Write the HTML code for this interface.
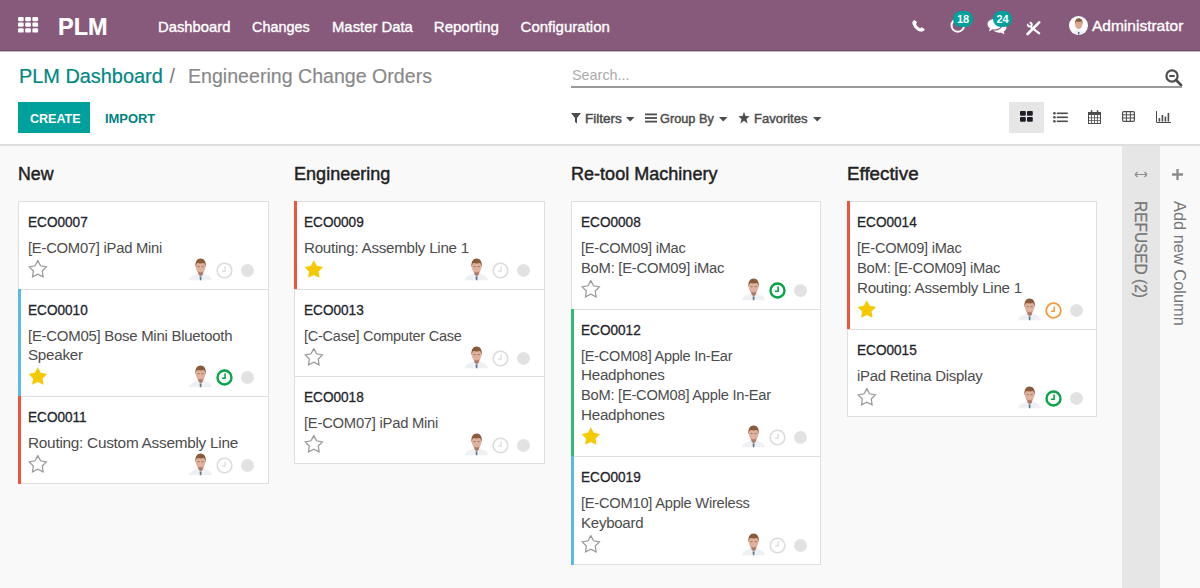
<!DOCTYPE html>
<html><head><meta charset="utf-8">
<style>
*{box-sizing:border-box;margin:0;padding:0}
html,body{width:1200px;height:588px;overflow:hidden;background:#fff;font-family:"Liberation Sans",sans-serif}
.a{position:absolute;white-space:nowrap;transform-origin:0 0}
#nav{position:absolute;left:0;top:0;width:1200px;height:51px;background:#875A7B;border-bottom:1px solid #734c68;box-shadow:0 1px 0 #c7b5c2;z-index:2}
.nt{color:#fff;font-size:15px;line-height:15px;-webkit-text-stroke:0.35px #fff}
.badge{position:absolute;background:#00A09D;color:#fff;font-weight:bold;font-size:11px;line-height:16px;height:16px;border-radius:8px;text-align:center}
#cp{position:absolute;left:0;top:52px;width:1200px;height:94px;background:#fff;border-bottom:2px solid #dedede}
#kb{position:absolute;left:0;top:146px;width:1200px;height:442px;background:#f9f9f9}
.card{position:absolute;width:251px;background:#fff;border:1px solid #dedede}
.bar{position:absolute;left:-1px;top:-1px;bottom:-1px;width:3px}
.eco{position:absolute;font-size:14.4px;line-height:14.4px;letter-spacing:0px;color:#1f242b;-webkit-text-stroke:0.3px #1f242b}
.ln{position:absolute;font-size:14.7px;line-height:14.7px;letter-spacing:-0.25px;color:#4c4c4c;white-space:nowrap}
.gt{position:absolute;font-size:18px;line-height:18px;color:#222;-webkit-text-stroke:0.45px #222}
</style></head><body>

<div id="nav">
  <svg class="a" style="left:18px;top:17px" width="21" height="16" viewBox="0 0 21 16"><g fill="#fff"><rect x="0" y="0" width="5.7" height="4.2" rx="1.2"/><rect x="7.2" y="0" width="5.7" height="4.2" rx="1.2"/><rect x="14.4" y="0" width="5.7" height="4.2" rx="1.2"/><rect x="0" y="5.6" width="5.7" height="4.2" rx="1.2"/><rect x="7.2" y="5.6" width="5.7" height="4.2" rx="1.2"/><rect x="14.4" y="5.6" width="5.7" height="4.2" rx="1.2"/><rect x="0" y="11.3" width="5.7" height="4.3" rx="1.2"/><rect x="7.2" y="11.3" width="5.7" height="4.3" rx="1.2"/><rect x="14.4" y="11.3" width="5.7" height="4.3" rx="1.2"/></g></svg>
  <div class="a nt" style="left:58px;top:15.5px;font-size:23.5px;line-height:23.5px;letter-spacing:0;font-weight:bold;-webkit-text-stroke:0.2px #fff">PLM</div>
  <div class="a nt" style="left:158.2px;top:19px;transform:scaleX(0.986)">Dashboard</div>
  <div class="a nt" style="left:251.7px;top:19px;transform:scaleX(0.96)">Changes</div>
  <div class="a nt" style="left:331.6px;top:19px;transform:scaleX(0.99)">Master Data</div>
  <div class="a nt" style="left:433.8px;top:19px;transform:scaleX(1.0)">Reporting</div>
  <div class="a nt" style="left:520.6px;top:19px;transform:scaleX(1.0)">Configuration</div>

  <!-- phone -->
  <svg class="a" style="left:912px;top:20px" width="13" height="12" viewBox="0 0 13 12">
    <path fill="#fff" d="M2.2 0.3 C1.2 0.8 0.2 1.8 0.4 3.2 C0.9 6.6 4.6 10.6 8.6 11.6 C10.1 12 11.2 11.2 12.3 10.3 L12.6 9.9 C12.8 9.6 12.7 9.2 12.4 9 L10.2 7.4 C9.9 7.2 9.5 7.2 9.2 7.5 L8.3 8.4 C6.3 7.5 4.7 5.7 3.9 3.8 L4.8 2.9 C5.1 2.6 5.1 2.2 4.9 1.9 L3.2 0.4 C2.9 0.1 2.5 0.1 2.2 0.3Z"/>
  </svg>
  <!-- activity clock -->
  <svg class="a" style="left:950px;top:18.2px" width="16" height="15" viewBox="0 0 16 15">
    <circle cx="7.8" cy="7.4" r="6.3" fill="none" stroke="#fff" stroke-width="2"/>
  </svg>
  <div class="badge" style="left:953px;top:11px;width:20px">18</div>
  <!-- chat -->
  <svg class="a" style="left:987px;top:17.5px" width="20" height="17" viewBox="0 0 20 17">
    <path fill="#fff" d="M7.5 1 C3.4 1 0.5 3.3 0.5 6.2 C0.5 7.8 1.4 9.2 2.9 10.2 L2 13.4 L5.6 11.2 C6.2 11.3 6.8 11.4 7.5 11.4 C11.6 11.4 14.5 9.1 14.5 6.2 C14.5 3.3 11.6 1 7.5 1Z"/>
    <path fill="#fff" d="M15.6 5.2 C15.7 5.5 15.7 5.9 15.7 6.2 C15.7 9.8 12.2 12.6 7.6 12.6 C7.3 12.6 7 12.6 6.7 12.6 C8 13.9 10.1 14.7 12.4 14.7 C13 14.7 13.5 14.6 14.1 14.5 L17.5 16.6 L16.7 13.5 C18.4 12.6 19.5 11.1 19.5 9.4 C19.5 7.6 17.9 6 15.6 5.2Z"/>
  </svg>
  <div class="badge" style="left:993px;top:11px;width:19px">24</div>
  <!-- tools -->
  <svg class="a" style="left:1025px;top:20px" width="17" height="16" viewBox="0 0 17 16">
    <path d="M6.4 7.4 L14.2 13.4" stroke="#fff" stroke-width="2.2" stroke-linecap="round" fill="none"/>
    <circle cx="4.8" cy="4.6" r="2.9" fill="#fff"/>
    <circle cx="4.7" cy="4.5" r="1.1" fill="#875A7B"/>
    <path d="M1 2.2 L2.8 0.6 L5.2 3 L3.4 4.6Z" fill="#875A7B"/>
    <path d="M2.6 14 L14.2 2.4" stroke="#fff" stroke-width="2.7" stroke-linecap="round" fill="none"/>
  </svg>
  <!-- avatar -->
  <svg class="a" style="left:1069px;top:16px" width="19" height="19" viewBox="0 0 19 19">
    <defs><clipPath id="cc"><circle cx="9.5" cy="9.5" r="9.3"/></clipPath></defs>
    <circle cx="9.5" cy="9.5" r="9.5" fill="#fff"/>
    <g clip-path="url(#cc)">
    <path d="M1.5 19 C2 16.6 4 15.6 6.5 14.8 L8 13.6 L11.4 13.6 L12.8 14.8 C15.2 15.6 17 16.6 17.5 19Z" fill="#eef0f3"/>
    <path d="M8.8 16 L10.6 16 L10.3 19 L9.1 19Z" fill="#62758c"/>
    <ellipse cx="9.7" cy="8.4" rx="3.6" ry="4.7" fill="#dcaa92"/>
    <path d="M6 8.8 C5.6 4.4 7.2 2.2 9.7 2.2 C12.4 2.2 14 4.2 13.5 8.8 C13.1 6.6 12.7 5.8 12.1 5.4 C10.8 5.8 8.7 5.8 7.4 5.4 C6.8 5.8 6.4 6.6 6 8.8Z" fill="#8a5a3d"/>
    </g>
  </svg>
  <div class="a nt" style="left:1092px;top:18px;font-size:15.5px;line-height:15.5px;letter-spacing:0">Administrator</div>
</div>

<div id="cp">
  <div class="a" style="left:19px;top:15px;font-size:19.9px;line-height:19.9px;color:#008784;-webkit-text-stroke:0.2px #008784">PLM Dashboard</div>
  <div class="a" style="left:169.5px;top:15px;font-size:19.6px;line-height:19.6px;color:#777">/</div>
  <div class="a" style="left:188px;top:15px;font-size:19.6px;line-height:19.6px;color:#888;-webkit-text-stroke:0.15px #888">Engineering Change Orders</div>

  <div class="a" style="left:18px;top:50px;width:72px;height:31px;background:#00A09D"></div>
  <div class="a" style="left:29.5px;top:60px;font-size:13.6px;line-height:13.6px;font-weight:bold;color:#fff;transform:scaleX(0.92)">CREATE</div>
  <div class="a" style="left:105px;top:60px;font-size:13.6px;line-height:13.6px;font-weight:bold;color:#00827f;transform:scaleX(0.95)">IMPORT</div>

  <div class="a" style="left:572px;top:16px;font-size:14.4px;line-height:14.4px;color:#ababab">Search...</div>
  <div class="a" style="left:571px;top:34px;width:611px;height:2px;background:#9a9a9a"></div>
  <svg class="a" style="left:1165px;top:17px" width="18" height="17" viewBox="0 0 18 17">
    <circle cx="7" cy="7" r="5.6" fill="none" stroke="#4c4c4c" stroke-width="2.2"/>
    <path d="M4.3 7 L9.7 7" stroke="#4c4c4c" stroke-width="2"/>
    <path d="M11 11 L16 16" stroke="#4c4c4c" stroke-width="2.6" stroke-linecap="round"/>
  </svg>

  <svg class="a" style="left:571px;top:61px" width="10" height="11" viewBox="0 0 10 11">
    <path d="M0 0 L10 0 L6 5 L6 10.5 L4 9 L4 5Z" fill="#4c4c4c"/>
  </svg>
  <div class="a" style="left:585px;top:60px;font-size:13px;line-height:13px;color:#4c4c4c;-webkit-text-stroke:0.45px #4c4c4c;transform:scaleX(1.04)">Filters</div>
  <svg class="a" style="left:626px;top:65px" width="9" height="5" viewBox="0 0 9 5"><path d="M0 0 L8.5 0 L4.25 4.5Z" fill="#4c4c4c"/></svg>

  <svg class="a" style="left:645px;top:61px" width="12" height="10" viewBox="0 0 12 10">
    <rect x="0" y="0.5" width="12" height="1.8" fill="#4c4c4c"/><rect x="0" y="4.1" width="12" height="1.8" fill="#4c4c4c"/><rect x="0" y="7.7" width="12" height="1.8" fill="#4c4c4c"/>
  </svg>
  <div class="a" style="left:660px;top:60px;font-size:13px;line-height:13px;color:#4c4c4c;-webkit-text-stroke:0.45px #4c4c4c;transform:scaleX(0.98)">Group By</div>
  <svg class="a" style="left:719px;top:65px" width="9" height="5" viewBox="0 0 9 5"><path d="M0 0 L8.5 0 L4.25 4.5Z" fill="#4c4c4c"/></svg>

  <svg class="a" style="left:738px;top:60px" width="12" height="12" viewBox="0 0 12 12">
    <path d="M6 0 L7.5 4 L11.8 4.2 L8.4 6.9 L9.6 11.4 L6 8.8 L2.4 11.4 L3.6 6.9 L0.2 4.2 L4.5 4Z" fill="#4c4c4c"/>
  </svg>
  <div class="a" style="left:754px;top:60px;font-size:13px;line-height:13px;color:#4c4c4c;-webkit-text-stroke:0.45px #4c4c4c;transform:scaleX(1.0)">Favorites</div>
  <svg class="a" style="left:813px;top:65px" width="9" height="5" viewBox="0 0 9 5"><path d="M0 0 L8.5 0 L4.25 4.5Z" fill="#4c4c4c"/></svg>

  <!-- view switcher -->
  <div class="a" style="left:1009px;top:50px;width:35px;height:31px;background:#e6e6e6"></div>
  <svg class="a" style="left:1020px;top:59px" width="13" height="11" viewBox="0 0 13 11">
    <rect x="0" y="0" width="5.8" height="4.8" rx="1" fill="#1e1e28"/><rect x="7" y="0" width="5.8" height="4.8" rx="1" fill="#1e1e28"/>
    <rect x="0" y="6" width="5.8" height="4.8" rx="1" fill="#1e1e28"/><rect x="7" y="6" width="5.8" height="4.8" rx="1" fill="#1e1e28"/>
  </svg>
  <svg class="a" style="left:1053px;top:60px" width="15" height="11" viewBox="0 0 15 11">
    <g fill="#4c4c4c"><circle cx="1.4" cy="1.3" r="1.3"/><circle cx="1.4" cy="5.3" r="1.3"/><circle cx="1.4" cy="9.3" r="1.3"/>
    <rect x="3.8" y="0.5" width="11" height="1.6"/><rect x="3.8" y="4.5" width="11" height="1.6"/><rect x="3.8" y="8.5" width="11" height="1.6"/></g>
  </svg>
  <svg class="a" style="left:1088px;top:58px" width="13" height="14" viewBox="0 0 13 14">
    <rect x="0.5" y="2.5" width="12" height="11" fill="none" stroke="#4c4c4c" stroke-width="1"/>
    <rect x="0.5" y="2.5" width="12" height="2.5" fill="#4c4c4c"/>
    <path d="M3.5 5 V13.5 M6.5 5 V13.5 M9.5 5 V13.5 M0.5 7.8 H12.5 M0.5 10.6 H12.5" stroke="#4c4c4c" stroke-width="0.8"/>
    <rect x="2.8" y="0.2" width="1.5" height="3.2" fill="#4c4c4c"/><rect x="8.8" y="0.2" width="1.5" height="3.2" fill="#4c4c4c"/>
  </svg>
  <svg class="a" style="left:1122px;top:59px" width="13" height="11" viewBox="0 0 13 11">
    <rect x="0.6" y="0.6" width="11.8" height="9.8" rx="1.2" fill="none" stroke="#4c4c4c" stroke-width="1.2"/>
    <path d="M0.6 3.8 H12.4 M0.6 7 H12.4 M4.4 0.6 V10.4 M8.4 0.6 V10.4" stroke="#4c4c4c" stroke-width="1"/>
  </svg>
  <svg class="a" style="left:1156px;top:59px" width="15" height="12" viewBox="0 0 15 12">
    <path d="M0.5 0 V11.5 H15" fill="none" stroke="#4c4c4c" stroke-width="1"/>
    <rect x="2.6" y="7" width="1.6" height="3.6" fill="#4c4c4c"/><rect x="5.6" y="4" width="1.6" height="6.6" fill="#4c4c4c"/><rect x="8.6" y="5.6" width="1.6" height="5" fill="#4c4c4c"/><rect x="11.6" y="2" width="1.6" height="8.6" fill="#4c4c4c"/>
  </svg>
</div>


<!--KB-->
<div id="kb"></div>
<div class="a gt" style="left:17.6px;top:165px;transform:scaleX(0.9886)">New</div>
<div class="card" style="left:18px;top:201px;width:251px;height:89px"></div>
<div class="a eco" style="left:27.9px;top:214.5px;transform:scaleX(0.9444)">ECO0007</div>
<div class="a ln" style="left:27.9px;top:240.5px;transform:scaleX(1.0068)">[E-COM07] iPad Mini</div>
<svg class="a" style="left:27.7px;top:259.5px" width="20" height="20" viewBox="0 0 20 20"><path d="M9.80 0.60 L12.56 5.80 L18.36 6.82 L14.27 11.05 L15.09 16.88 L9.80 14.30 L4.51 16.88 L5.33 11.05 L1.24 6.82 L7.04 5.80Z" fill="none" stroke="#9a9a9a" stroke-width="1.25" stroke-linejoin="miter"/></svg>
<svg class="a" style="left:189px;top:257.7px" width="23" height="23" viewBox="0 0 23 23">
<path d="M0 22.2 C0.6 18.6 3 17.4 6.5 16.4 L9.2 14.6 L14.2 14.6 L16.8 16.4 C20.2 17.4 22.4 18.6 23 22.2Z" fill="#eef0f3"/>
<path d="M9 14.2 L14.4 14.2 L13.6 17 L11.8 18.2 L9.8 17Z" fill="#a97b68"/>
<path d="M10.6 18.6 L12.6 18.6 L12.3 22.2 L10.9 22.2Z" fill="#62758c"/>
<ellipse cx="11.6" cy="8.6" rx="4.9" ry="6.2" fill="#e0b19c"/>
<path d="M7.6 12.5 C8.6 14.6 10 15.4 11.6 15.4 C13.3 15.4 14.6 14.6 15.6 12.5 C14.6 13.6 13.2 14.2 11.6 14.2 C10 14.2 8.6 13.6 7.6 12.5Z" fill="#b98270"/>
<path d="M6.5 9.5 C5.8 3.6 8.2 0.6 11.6 0.6 C15.2 0.6 17.4 3.4 16.7 9.5 C16.2 6.6 15.6 5.6 14.8 5 C13 5.6 10.2 5.6 8.4 5 C7.6 5.6 7 6.6 6.5 9.5Z" fill="#8a5a3d"/>
<path d="M8.6 8.6 H10.6 M12.6 8.6 H14.6" stroke="#8d6a5c" stroke-width="0.9"/>
</svg>
<svg class="a" style="left:216.3px;top:261.7px" width="17" height="17" viewBox="0 0 17 17"><circle cx="8.5" cy="8.5" r="7.3" fill="none" stroke="#dcdcdc" stroke-width="1.6"/><path d="M9.1 4.6 V9.2 H5.9" fill="none" stroke="#dcdcdc" stroke-width="1.3"/></svg>
<div class="a" style="left:241px;top:263.8px;width:13.2px;height:13.2px;border-radius:50%;background:#e2e2e2"></div>
<div class="card" style="left:18px;top:289px;width:251px;height:108px"></div>
<div class="a" style="left:18px;top:289px;width:3px;height:108px;background:#5cb8e6"></div>
<div class="a eco" style="left:27.9px;top:302.5px;transform:scaleX(0.9444)">ECO0010</div>
<div class="a ln" style="left:27.9px;top:328.5px;transform:scaleX(1.0165)">[E-COM05] Bose Mini Bluetooth</div>
<div class="a ln" style="left:27.9px;top:348.0px;transform:scaleX(1.0333)">Speaker</div>
<svg class="a" style="left:27.7px;top:367.0px" width="20" height="20" viewBox="0 0 20 20"><path d="M9.80 0.20 L12.74 5.85 L19.03 6.90 L14.56 11.45 L15.50 17.75 L9.80 14.90 L4.10 17.75 L5.04 11.45 L0.57 6.90 L6.86 5.85Z" fill="#f5c900"/></svg>
<svg class="a" style="left:189px;top:365.2px" width="23" height="23" viewBox="0 0 23 23">
<path d="M0 22.2 C0.6 18.6 3 17.4 6.5 16.4 L9.2 14.6 L14.2 14.6 L16.8 16.4 C20.2 17.4 22.4 18.6 23 22.2Z" fill="#eef0f3"/>
<path d="M9 14.2 L14.4 14.2 L13.6 17 L11.8 18.2 L9.8 17Z" fill="#a97b68"/>
<path d="M10.6 18.6 L12.6 18.6 L12.3 22.2 L10.9 22.2Z" fill="#62758c"/>
<ellipse cx="11.6" cy="8.6" rx="4.9" ry="6.2" fill="#e0b19c"/>
<path d="M7.6 12.5 C8.6 14.6 10 15.4 11.6 15.4 C13.3 15.4 14.6 14.6 15.6 12.5 C14.6 13.6 13.2 14.2 11.6 14.2 C10 14.2 8.6 13.6 7.6 12.5Z" fill="#b98270"/>
<path d="M6.5 9.5 C5.8 3.6 8.2 0.6 11.6 0.6 C15.2 0.6 17.4 3.4 16.7 9.5 C16.2 6.6 15.6 5.6 14.8 5 C13 5.6 10.2 5.6 8.4 5 C7.6 5.6 7 6.6 6.5 9.5Z" fill="#8a5a3d"/>
<path d="M8.6 8.6 H10.6 M12.6 8.6 H14.6" stroke="#8d6a5c" stroke-width="0.9"/>
</svg>
<svg class="a" style="left:216.3px;top:369.2px" width="17" height="17" viewBox="0 0 17 17"><circle cx="8.5" cy="8.5" r="7" fill="none" stroke="#0aa345" stroke-width="2.4"/><path d="M9.1 4.6 V9.2 H5.9" fill="none" stroke="#0aa345" stroke-width="1.6"/></svg>
<div class="a" style="left:241px;top:371.3px;width:13.2px;height:13.2px;border-radius:50%;background:#e2e2e2"></div>
<div class="card" style="left:18px;top:396px;width:251px;height:88px"></div>
<div class="a" style="left:18px;top:396px;width:3px;height:88px;background:#f0543c"></div>
<div class="a eco" style="left:27.9px;top:409.5px;transform:scaleX(0.9444)">ECO0011</div>
<div class="a ln" style="left:27.9px;top:435.5px;transform:scaleX(1.0452)">Routing: Custom Assembly Line</div>
<svg class="a" style="left:27.7px;top:454.5px" width="20" height="20" viewBox="0 0 20 20"><path d="M9.80 0.60 L12.56 5.80 L18.36 6.82 L14.27 11.05 L15.09 16.88 L9.80 14.30 L4.51 16.88 L5.33 11.05 L1.24 6.82 L7.04 5.80Z" fill="none" stroke="#9a9a9a" stroke-width="1.25" stroke-linejoin="miter"/></svg>
<svg class="a" style="left:189px;top:452.7px" width="23" height="23" viewBox="0 0 23 23">
<path d="M0 22.2 C0.6 18.6 3 17.4 6.5 16.4 L9.2 14.6 L14.2 14.6 L16.8 16.4 C20.2 17.4 22.4 18.6 23 22.2Z" fill="#eef0f3"/>
<path d="M9 14.2 L14.4 14.2 L13.6 17 L11.8 18.2 L9.8 17Z" fill="#a97b68"/>
<path d="M10.6 18.6 L12.6 18.6 L12.3 22.2 L10.9 22.2Z" fill="#62758c"/>
<ellipse cx="11.6" cy="8.6" rx="4.9" ry="6.2" fill="#e0b19c"/>
<path d="M7.6 12.5 C8.6 14.6 10 15.4 11.6 15.4 C13.3 15.4 14.6 14.6 15.6 12.5 C14.6 13.6 13.2 14.2 11.6 14.2 C10 14.2 8.6 13.6 7.6 12.5Z" fill="#b98270"/>
<path d="M6.5 9.5 C5.8 3.6 8.2 0.6 11.6 0.6 C15.2 0.6 17.4 3.4 16.7 9.5 C16.2 6.6 15.6 5.6 14.8 5 C13 5.6 10.2 5.6 8.4 5 C7.6 5.6 7 6.6 6.5 9.5Z" fill="#8a5a3d"/>
<path d="M8.6 8.6 H10.6 M12.6 8.6 H14.6" stroke="#8d6a5c" stroke-width="0.9"/>
</svg>
<svg class="a" style="left:216.3px;top:456.7px" width="17" height="17" viewBox="0 0 17 17"><circle cx="8.5" cy="8.5" r="7.3" fill="none" stroke="#dcdcdc" stroke-width="1.6"/><path d="M9.1 4.6 V9.2 H5.9" fill="none" stroke="#dcdcdc" stroke-width="1.3"/></svg>
<div class="a" style="left:241px;top:458.8px;width:13.2px;height:13.2px;border-radius:50%;background:#e2e2e2"></div>
<div class="a gt" style="left:293.6px;top:165px;transform:scaleX(1.0032)">Engineering</div>
<div class="card" style="left:294px;top:201px;width:251px;height:89px"></div>
<div class="a" style="left:294px;top:201px;width:3px;height:89px;background:#f0543c"></div>
<div class="a eco" style="left:303.9px;top:214.5px;transform:scaleX(0.9444)">ECO0009</div>
<div class="a ln" style="left:303.9px;top:240.5px;transform:scaleX(1.0323)">Routing: Assembly Line 1</div>
<svg class="a" style="left:303.7px;top:259.5px" width="20" height="20" viewBox="0 0 20 20"><path d="M9.80 0.20 L12.74 5.85 L19.03 6.90 L14.56 11.45 L15.50 17.75 L9.80 14.90 L4.10 17.75 L5.04 11.45 L0.57 6.90 L6.86 5.85Z" fill="#f5c900"/></svg>
<svg class="a" style="left:465px;top:257.7px" width="23" height="23" viewBox="0 0 23 23">
<path d="M0 22.2 C0.6 18.6 3 17.4 6.5 16.4 L9.2 14.6 L14.2 14.6 L16.8 16.4 C20.2 17.4 22.4 18.6 23 22.2Z" fill="#eef0f3"/>
<path d="M9 14.2 L14.4 14.2 L13.6 17 L11.8 18.2 L9.8 17Z" fill="#a97b68"/>
<path d="M10.6 18.6 L12.6 18.6 L12.3 22.2 L10.9 22.2Z" fill="#62758c"/>
<ellipse cx="11.6" cy="8.6" rx="4.9" ry="6.2" fill="#e0b19c"/>
<path d="M7.6 12.5 C8.6 14.6 10 15.4 11.6 15.4 C13.3 15.4 14.6 14.6 15.6 12.5 C14.6 13.6 13.2 14.2 11.6 14.2 C10 14.2 8.6 13.6 7.6 12.5Z" fill="#b98270"/>
<path d="M6.5 9.5 C5.8 3.6 8.2 0.6 11.6 0.6 C15.2 0.6 17.4 3.4 16.7 9.5 C16.2 6.6 15.6 5.6 14.8 5 C13 5.6 10.2 5.6 8.4 5 C7.6 5.6 7 6.6 6.5 9.5Z" fill="#8a5a3d"/>
<path d="M8.6 8.6 H10.6 M12.6 8.6 H14.6" stroke="#8d6a5c" stroke-width="0.9"/>
</svg>
<svg class="a" style="left:492.3px;top:261.7px" width="17" height="17" viewBox="0 0 17 17"><circle cx="8.5" cy="8.5" r="7.3" fill="none" stroke="#dcdcdc" stroke-width="1.6"/><path d="M9.1 4.6 V9.2 H5.9" fill="none" stroke="#dcdcdc" stroke-width="1.3"/></svg>
<div class="a" style="left:517px;top:263.8px;width:13.2px;height:13.2px;border-radius:50%;background:#e2e2e2"></div>
<div class="card" style="left:294px;top:289px;width:251px;height:88px"></div>
<div class="a eco" style="left:303.9px;top:302.5px;transform:scaleX(0.9444)">ECO0013</div>
<div class="a ln" style="left:303.9px;top:328.5px;transform:scaleX(0.9887)">[C-Case] Computer Case</div>
<svg class="a" style="left:303.7px;top:347.5px" width="20" height="20" viewBox="0 0 20 20"><path d="M9.80 0.60 L12.56 5.80 L18.36 6.82 L14.27 11.05 L15.09 16.88 L9.80 14.30 L4.51 16.88 L5.33 11.05 L1.24 6.82 L7.04 5.80Z" fill="none" stroke="#9a9a9a" stroke-width="1.25" stroke-linejoin="miter"/></svg>
<svg class="a" style="left:465px;top:345.7px" width="23" height="23" viewBox="0 0 23 23">
<path d="M0 22.2 C0.6 18.6 3 17.4 6.5 16.4 L9.2 14.6 L14.2 14.6 L16.8 16.4 C20.2 17.4 22.4 18.6 23 22.2Z" fill="#eef0f3"/>
<path d="M9 14.2 L14.4 14.2 L13.6 17 L11.8 18.2 L9.8 17Z" fill="#a97b68"/>
<path d="M10.6 18.6 L12.6 18.6 L12.3 22.2 L10.9 22.2Z" fill="#62758c"/>
<ellipse cx="11.6" cy="8.6" rx="4.9" ry="6.2" fill="#e0b19c"/>
<path d="M7.6 12.5 C8.6 14.6 10 15.4 11.6 15.4 C13.3 15.4 14.6 14.6 15.6 12.5 C14.6 13.6 13.2 14.2 11.6 14.2 C10 14.2 8.6 13.6 7.6 12.5Z" fill="#b98270"/>
<path d="M6.5 9.5 C5.8 3.6 8.2 0.6 11.6 0.6 C15.2 0.6 17.4 3.4 16.7 9.5 C16.2 6.6 15.6 5.6 14.8 5 C13 5.6 10.2 5.6 8.4 5 C7.6 5.6 7 6.6 6.5 9.5Z" fill="#8a5a3d"/>
<path d="M8.6 8.6 H10.6 M12.6 8.6 H14.6" stroke="#8d6a5c" stroke-width="0.9"/>
</svg>
<svg class="a" style="left:492.3px;top:349.7px" width="17" height="17" viewBox="0 0 17 17"><circle cx="8.5" cy="8.5" r="7.3" fill="none" stroke="#dcdcdc" stroke-width="1.6"/><path d="M9.1 4.6 V9.2 H5.9" fill="none" stroke="#dcdcdc" stroke-width="1.3"/></svg>
<div class="a" style="left:517px;top:351.8px;width:13.2px;height:13.2px;border-radius:50%;background:#e2e2e2"></div>
<div class="card" style="left:294px;top:376px;width:251px;height:88px"></div>
<div class="a eco" style="left:303.9px;top:389.5px;transform:scaleX(0.9444)">ECO0018</div>
<div class="a ln" style="left:303.9px;top:415.5px;transform:scaleX(1.0068)">[E-COM07] iPad Mini</div>
<svg class="a" style="left:303.7px;top:434.5px" width="20" height="20" viewBox="0 0 20 20"><path d="M9.80 0.60 L12.56 5.80 L18.36 6.82 L14.27 11.05 L15.09 16.88 L9.80 14.30 L4.51 16.88 L5.33 11.05 L1.24 6.82 L7.04 5.80Z" fill="none" stroke="#9a9a9a" stroke-width="1.25" stroke-linejoin="miter"/></svg>
<svg class="a" style="left:465px;top:432.7px" width="23" height="23" viewBox="0 0 23 23">
<path d="M0 22.2 C0.6 18.6 3 17.4 6.5 16.4 L9.2 14.6 L14.2 14.6 L16.8 16.4 C20.2 17.4 22.4 18.6 23 22.2Z" fill="#eef0f3"/>
<path d="M9 14.2 L14.4 14.2 L13.6 17 L11.8 18.2 L9.8 17Z" fill="#a97b68"/>
<path d="M10.6 18.6 L12.6 18.6 L12.3 22.2 L10.9 22.2Z" fill="#62758c"/>
<ellipse cx="11.6" cy="8.6" rx="4.9" ry="6.2" fill="#e0b19c"/>
<path d="M7.6 12.5 C8.6 14.6 10 15.4 11.6 15.4 C13.3 15.4 14.6 14.6 15.6 12.5 C14.6 13.6 13.2 14.2 11.6 14.2 C10 14.2 8.6 13.6 7.6 12.5Z" fill="#b98270"/>
<path d="M6.5 9.5 C5.8 3.6 8.2 0.6 11.6 0.6 C15.2 0.6 17.4 3.4 16.7 9.5 C16.2 6.6 15.6 5.6 14.8 5 C13 5.6 10.2 5.6 8.4 5 C7.6 5.6 7 6.6 6.5 9.5Z" fill="#8a5a3d"/>
<path d="M8.6 8.6 H10.6 M12.6 8.6 H14.6" stroke="#8d6a5c" stroke-width="0.9"/>
</svg>
<svg class="a" style="left:492.3px;top:436.7px" width="17" height="17" viewBox="0 0 17 17"><circle cx="8.5" cy="8.5" r="7.3" fill="none" stroke="#dcdcdc" stroke-width="1.6"/><path d="M9.1 4.6 V9.2 H5.9" fill="none" stroke="#dcdcdc" stroke-width="1.3"/></svg>
<div class="a" style="left:517px;top:438.8px;width:13.2px;height:13.2px;border-radius:50%;background:#e2e2e2"></div>
<div class="a gt" style="left:570.6px;top:165px;transform:scaleX(1.0028)">Re-tool Machinery</div>
<div class="card" style="left:571px;top:201px;width:250px;height:109px"></div>
<div class="a eco" style="left:580.9px;top:214.5px;transform:scaleX(0.9444)">ECO0008</div>
<div class="a ln" style="left:580.9px;top:240.5px;transform:scaleX(0.9952)">[E-COM09] iMac</div>
<div class="a ln" style="left:580.9px;top:260.5px;transform:scaleX(1.0071)">BoM: [E-COM09] iMac</div>
<svg class="a" style="left:580.7px;top:279.5px" width="20" height="20" viewBox="0 0 20 20"><path d="M9.80 0.60 L12.56 5.80 L18.36 6.82 L14.27 11.05 L15.09 16.88 L9.80 14.30 L4.51 16.88 L5.33 11.05 L1.24 6.82 L7.04 5.80Z" fill="none" stroke="#9a9a9a" stroke-width="1.25" stroke-linejoin="miter"/></svg>
<svg class="a" style="left:742px;top:277.7px" width="23" height="23" viewBox="0 0 23 23">
<path d="M0 22.2 C0.6 18.6 3 17.4 6.5 16.4 L9.2 14.6 L14.2 14.6 L16.8 16.4 C20.2 17.4 22.4 18.6 23 22.2Z" fill="#eef0f3"/>
<path d="M9 14.2 L14.4 14.2 L13.6 17 L11.8 18.2 L9.8 17Z" fill="#a97b68"/>
<path d="M10.6 18.6 L12.6 18.6 L12.3 22.2 L10.9 22.2Z" fill="#62758c"/>
<ellipse cx="11.6" cy="8.6" rx="4.9" ry="6.2" fill="#e0b19c"/>
<path d="M7.6 12.5 C8.6 14.6 10 15.4 11.6 15.4 C13.3 15.4 14.6 14.6 15.6 12.5 C14.6 13.6 13.2 14.2 11.6 14.2 C10 14.2 8.6 13.6 7.6 12.5Z" fill="#b98270"/>
<path d="M6.5 9.5 C5.8 3.6 8.2 0.6 11.6 0.6 C15.2 0.6 17.4 3.4 16.7 9.5 C16.2 6.6 15.6 5.6 14.8 5 C13 5.6 10.2 5.6 8.4 5 C7.6 5.6 7 6.6 6.5 9.5Z" fill="#8a5a3d"/>
<path d="M8.6 8.6 H10.6 M12.6 8.6 H14.6" stroke="#8d6a5c" stroke-width="0.9"/>
</svg>
<svg class="a" style="left:769.3px;top:281.7px" width="17" height="17" viewBox="0 0 17 17"><circle cx="8.5" cy="8.5" r="7" fill="none" stroke="#0aa345" stroke-width="2.4"/><path d="M9.1 4.6 V9.2 H5.9" fill="none" stroke="#0aa345" stroke-width="1.6"/></svg>
<div class="a" style="left:794px;top:283.8px;width:13.2px;height:13.2px;border-radius:50%;background:#e2e2e2"></div>
<div class="card" style="left:571px;top:309px;width:250px;height:148px"></div>
<div class="a" style="left:571px;top:309px;width:3px;height:148px;background:#30bb76"></div>
<div class="a eco" style="left:580.9px;top:322.5px;transform:scaleX(0.9444)">ECO0012</div>
<div class="a ln" style="left:580.9px;top:348.5px;transform:scaleX(0.9895)">[E-COM08] Apple In-Ear</div>
<div class="a ln" style="left:580.9px;top:368.0px;transform:scaleX(1.0342)">Headphones</div>
<div class="a ln" style="left:580.9px;top:388.0px;transform:scaleX(0.9995)">BoM: [E-COM08] Apple In-Ear</div>
<div class="a ln" style="left:580.9px;top:407.5px;transform:scaleX(1.0342)">Headphones</div>
<svg class="a" style="left:580.7px;top:426.5px" width="20" height="20" viewBox="0 0 20 20"><path d="M9.80 0.20 L12.74 5.85 L19.03 6.90 L14.56 11.45 L15.50 17.75 L9.80 14.90 L4.10 17.75 L5.04 11.45 L0.57 6.90 L6.86 5.85Z" fill="#f5c900"/></svg>
<svg class="a" style="left:742px;top:424.7px" width="23" height="23" viewBox="0 0 23 23">
<path d="M0 22.2 C0.6 18.6 3 17.4 6.5 16.4 L9.2 14.6 L14.2 14.6 L16.8 16.4 C20.2 17.4 22.4 18.6 23 22.2Z" fill="#eef0f3"/>
<path d="M9 14.2 L14.4 14.2 L13.6 17 L11.8 18.2 L9.8 17Z" fill="#a97b68"/>
<path d="M10.6 18.6 L12.6 18.6 L12.3 22.2 L10.9 22.2Z" fill="#62758c"/>
<ellipse cx="11.6" cy="8.6" rx="4.9" ry="6.2" fill="#e0b19c"/>
<path d="M7.6 12.5 C8.6 14.6 10 15.4 11.6 15.4 C13.3 15.4 14.6 14.6 15.6 12.5 C14.6 13.6 13.2 14.2 11.6 14.2 C10 14.2 8.6 13.6 7.6 12.5Z" fill="#b98270"/>
<path d="M6.5 9.5 C5.8 3.6 8.2 0.6 11.6 0.6 C15.2 0.6 17.4 3.4 16.7 9.5 C16.2 6.6 15.6 5.6 14.8 5 C13 5.6 10.2 5.6 8.4 5 C7.6 5.6 7 6.6 6.5 9.5Z" fill="#8a5a3d"/>
<path d="M8.6 8.6 H10.6 M12.6 8.6 H14.6" stroke="#8d6a5c" stroke-width="0.9"/>
</svg>
<svg class="a" style="left:769.3px;top:428.7px" width="17" height="17" viewBox="0 0 17 17"><circle cx="8.5" cy="8.5" r="7.3" fill="none" stroke="#dcdcdc" stroke-width="1.6"/><path d="M9.1 4.6 V9.2 H5.9" fill="none" stroke="#dcdcdc" stroke-width="1.3"/></svg>
<div class="a" style="left:794px;top:430.8px;width:13.2px;height:13.2px;border-radius:50%;background:#e2e2e2"></div>
<div class="card" style="left:571px;top:456px;width:250px;height:109px"></div>
<div class="a" style="left:571px;top:456px;width:3px;height:109px;background:#5cb8e6"></div>
<div class="a eco" style="left:580.9px;top:469.5px;transform:scaleX(0.9444)">ECO0019</div>
<div class="a ln" style="left:580.9px;top:495.5px;transform:scaleX(0.9994)">[E-COM10] Apple Wireless</div>
<div class="a ln" style="left:580.9px;top:515.5px;transform:scaleX(1.0237)">Keyboard</div>
<svg class="a" style="left:580.7px;top:534.5px" width="20" height="20" viewBox="0 0 20 20"><path d="M9.80 0.60 L12.56 5.80 L18.36 6.82 L14.27 11.05 L15.09 16.88 L9.80 14.30 L4.51 16.88 L5.33 11.05 L1.24 6.82 L7.04 5.80Z" fill="none" stroke="#9a9a9a" stroke-width="1.25" stroke-linejoin="miter"/></svg>
<svg class="a" style="left:742px;top:532.7px" width="23" height="23" viewBox="0 0 23 23">
<path d="M0 22.2 C0.6 18.6 3 17.4 6.5 16.4 L9.2 14.6 L14.2 14.6 L16.8 16.4 C20.2 17.4 22.4 18.6 23 22.2Z" fill="#eef0f3"/>
<path d="M9 14.2 L14.4 14.2 L13.6 17 L11.8 18.2 L9.8 17Z" fill="#a97b68"/>
<path d="M10.6 18.6 L12.6 18.6 L12.3 22.2 L10.9 22.2Z" fill="#62758c"/>
<ellipse cx="11.6" cy="8.6" rx="4.9" ry="6.2" fill="#e0b19c"/>
<path d="M7.6 12.5 C8.6 14.6 10 15.4 11.6 15.4 C13.3 15.4 14.6 14.6 15.6 12.5 C14.6 13.6 13.2 14.2 11.6 14.2 C10 14.2 8.6 13.6 7.6 12.5Z" fill="#b98270"/>
<path d="M6.5 9.5 C5.8 3.6 8.2 0.6 11.6 0.6 C15.2 0.6 17.4 3.4 16.7 9.5 C16.2 6.6 15.6 5.6 14.8 5 C13 5.6 10.2 5.6 8.4 5 C7.6 5.6 7 6.6 6.5 9.5Z" fill="#8a5a3d"/>
<path d="M8.6 8.6 H10.6 M12.6 8.6 H14.6" stroke="#8d6a5c" stroke-width="0.9"/>
</svg>
<svg class="a" style="left:769.3px;top:536.7px" width="17" height="17" viewBox="0 0 17 17"><circle cx="8.5" cy="8.5" r="7.3" fill="none" stroke="#dcdcdc" stroke-width="1.6"/><path d="M9.1 4.6 V9.2 H5.9" fill="none" stroke="#dcdcdc" stroke-width="1.3"/></svg>
<div class="a" style="left:794px;top:538.8px;width:13.2px;height:13.2px;border-radius:50%;background:#e2e2e2"></div>
<div class="a gt" style="left:846.6px;top:165px;transform:scaleX(1.0418)">Effective</div>
<div class="card" style="left:847px;top:201px;width:250px;height:129px"></div>
<div class="a" style="left:847px;top:201px;width:3px;height:129px;background:#f0543c"></div>
<div class="a eco" style="left:856.9px;top:214.5px;transform:scaleX(0.9444)">ECO0014</div>
<div class="a ln" style="left:856.9px;top:240.5px;transform:scaleX(0.9952)">[E-COM09] iMac</div>
<div class="a ln" style="left:856.9px;top:260.5px;transform:scaleX(1.0071)">BoM: [E-COM09] iMac</div>
<div class="a ln" style="left:856.9px;top:280.5px;transform:scaleX(1.0323)">Routing: Assembly Line 1</div>
<svg class="a" style="left:856.7px;top:299.5px" width="20" height="20" viewBox="0 0 20 20"><path d="M9.80 0.20 L12.74 5.85 L19.03 6.90 L14.56 11.45 L15.50 17.75 L9.80 14.90 L4.10 17.75 L5.04 11.45 L0.57 6.90 L6.86 5.85Z" fill="#f5c900"/></svg>
<svg class="a" style="left:1018px;top:297.7px" width="23" height="23" viewBox="0 0 23 23">
<path d="M0 22.2 C0.6 18.6 3 17.4 6.5 16.4 L9.2 14.6 L14.2 14.6 L16.8 16.4 C20.2 17.4 22.4 18.6 23 22.2Z" fill="#eef0f3"/>
<path d="M9 14.2 L14.4 14.2 L13.6 17 L11.8 18.2 L9.8 17Z" fill="#a97b68"/>
<path d="M10.6 18.6 L12.6 18.6 L12.3 22.2 L10.9 22.2Z" fill="#62758c"/>
<ellipse cx="11.6" cy="8.6" rx="4.9" ry="6.2" fill="#e0b19c"/>
<path d="M7.6 12.5 C8.6 14.6 10 15.4 11.6 15.4 C13.3 15.4 14.6 14.6 15.6 12.5 C14.6 13.6 13.2 14.2 11.6 14.2 C10 14.2 8.6 13.6 7.6 12.5Z" fill="#b98270"/>
<path d="M6.5 9.5 C5.8 3.6 8.2 0.6 11.6 0.6 C15.2 0.6 17.4 3.4 16.7 9.5 C16.2 6.6 15.6 5.6 14.8 5 C13 5.6 10.2 5.6 8.4 5 C7.6 5.6 7 6.6 6.5 9.5Z" fill="#8a5a3d"/>
<path d="M8.6 8.6 H10.6 M12.6 8.6 H14.6" stroke="#8d6a5c" stroke-width="0.9"/>
</svg>
<svg class="a" style="left:1045.3px;top:301.7px" width="17" height="17" viewBox="0 0 17 17"><circle cx="8.5" cy="8.5" r="7.3" fill="none" stroke="#f59a3a" stroke-width="1.8"/><path d="M9.1 4.6 V9.2 H5.9" fill="none" stroke="#f59a3a" stroke-width="1.5"/></svg>
<div class="a" style="left:1070px;top:303.8px;width:13.2px;height:13.2px;border-radius:50%;background:#e2e2e2"></div>
<div class="card" style="left:847px;top:329px;width:250px;height:88px"></div>
<div class="a eco" style="left:856.9px;top:342.5px;transform:scaleX(0.9444)">ECO0015</div>
<div class="a ln" style="left:856.9px;top:368.5px;transform:scaleX(1.0163)">iPad Retina Display</div>
<svg class="a" style="left:856.7px;top:387.5px" width="20" height="20" viewBox="0 0 20 20"><path d="M9.80 0.60 L12.56 5.80 L18.36 6.82 L14.27 11.05 L15.09 16.88 L9.80 14.30 L4.51 16.88 L5.33 11.05 L1.24 6.82 L7.04 5.80Z" fill="none" stroke="#9a9a9a" stroke-width="1.25" stroke-linejoin="miter"/></svg>
<svg class="a" style="left:1018px;top:385.7px" width="23" height="23" viewBox="0 0 23 23">
<path d="M0 22.2 C0.6 18.6 3 17.4 6.5 16.4 L9.2 14.6 L14.2 14.6 L16.8 16.4 C20.2 17.4 22.4 18.6 23 22.2Z" fill="#eef0f3"/>
<path d="M9 14.2 L14.4 14.2 L13.6 17 L11.8 18.2 L9.8 17Z" fill="#a97b68"/>
<path d="M10.6 18.6 L12.6 18.6 L12.3 22.2 L10.9 22.2Z" fill="#62758c"/>
<ellipse cx="11.6" cy="8.6" rx="4.9" ry="6.2" fill="#e0b19c"/>
<path d="M7.6 12.5 C8.6 14.6 10 15.4 11.6 15.4 C13.3 15.4 14.6 14.6 15.6 12.5 C14.6 13.6 13.2 14.2 11.6 14.2 C10 14.2 8.6 13.6 7.6 12.5Z" fill="#b98270"/>
<path d="M6.5 9.5 C5.8 3.6 8.2 0.6 11.6 0.6 C15.2 0.6 17.4 3.4 16.7 9.5 C16.2 6.6 15.6 5.6 14.8 5 C13 5.6 10.2 5.6 8.4 5 C7.6 5.6 7 6.6 6.5 9.5Z" fill="#8a5a3d"/>
<path d="M8.6 8.6 H10.6 M12.6 8.6 H14.6" stroke="#8d6a5c" stroke-width="0.9"/>
</svg>
<svg class="a" style="left:1045.3px;top:389.7px" width="17" height="17" viewBox="0 0 17 17"><circle cx="8.5" cy="8.5" r="7" fill="none" stroke="#0aa345" stroke-width="2.4"/><path d="M9.1 4.6 V9.2 H5.9" fill="none" stroke="#0aa345" stroke-width="1.6"/></svg>
<div class="a" style="left:1070px;top:391.8px;width:13.2px;height:13.2px;border-radius:50%;background:#e2e2e2"></div>
<div class="a" style="left:1122px;top:146px;width:38px;height:442px;background:#e6e6e6"></div>
<svg class="a" style="left:1134px;top:171px" width="14" height="7" viewBox="0 0 14 7"><path d="M1 3.5 H13 M1 3.5 L3.5 1 M1 3.5 L3.5 6 M13 3.5 L10.5 1 M13 3.5 L10.5 6" fill="none" stroke="#8f8f8f" stroke-width="1.2"/></svg>
<div class="a" style="left:1131px;top:201px;width:18px;height:96px;"><div style="position:absolute;left:0;top:0;transform-origin:0 0;transform:translate(18px,0) rotate(90deg) scaleX(0.92);font-size:16.8px;line-height:18px;color:#777;-webkit-text-stroke:0.3px #777;white-space:nowrap">REFUSED (2)</div></div>
<svg class="a" style="left:1172px;top:168.5px" width="11" height="11" viewBox="0 0 11 11"><path d="M5.5 0 V11 M0 5.5 H11" stroke="#8a8a8a" stroke-width="2.3"/></svg>
<div class="a" style="left:1170.5px;top:201px;width:18px;height:125px;"><div style="position:absolute;left:0;top:0;transform-origin:0 0;transform:translate(18px,0) rotate(90deg);font-size:16.4px;line-height:18px;color:#777;white-space:nowrap">Add new Column</div></div>
<!--/KB-->

</body></html>
